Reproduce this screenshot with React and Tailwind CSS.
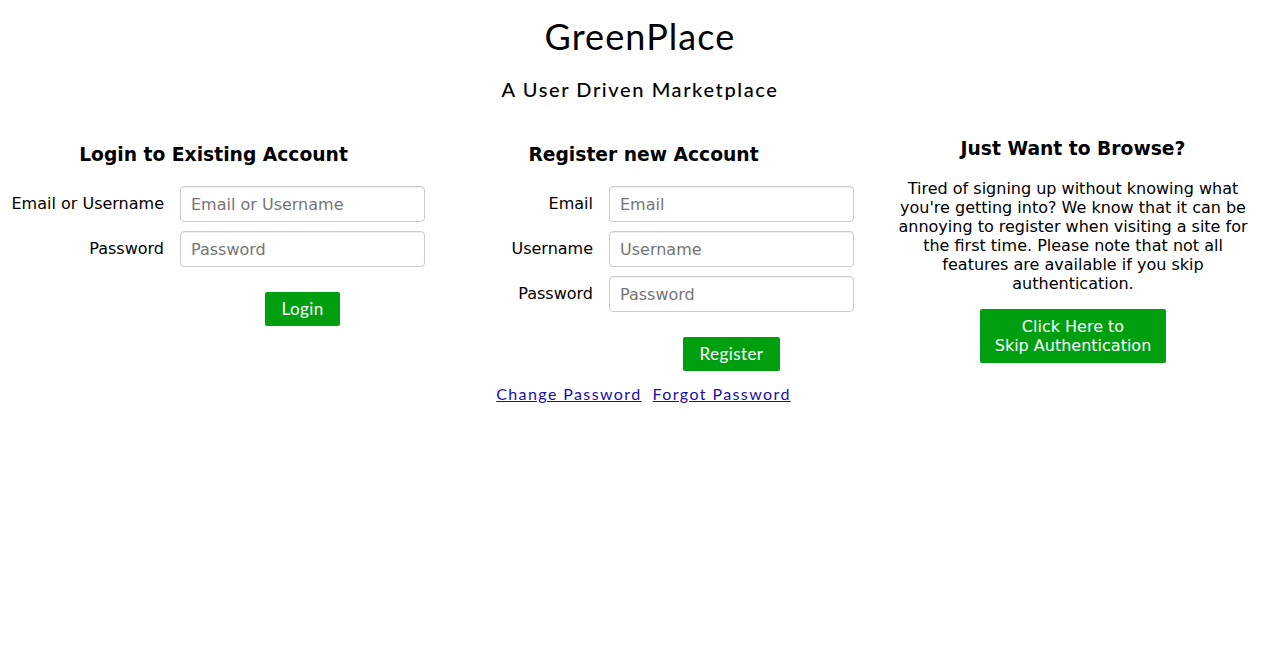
import { useState } from "react";

const body = { fontFamily: '"DejaVu Sans", sans-serif' };
const display = { fontFamily: 'Lato, "Open Sans", sans-serif' };

function Field({ label, placeholder, type = "text" }) {
  return (
    <>
      <label className="text-right text-base text-black self-center">{label}</label>
      <input
        type={type}
        placeholder={placeholder}
        className="h-9 w-[245px] rounded border border-[#cccccc] px-[10px] text-base text-black shadow-[inset_0_1px_1px_rgba(0,0,0,0.075)] placeholder:text-[#757575] outline-none"
        style={body}
      />
    </>
  );
}

function GreenButton({ children, className = "", style }) {
  return (
    <button
      className={"rounded-[2px] bg-[#009f0f] text-white " + className}
      style={style}
    >
      {children}
    </button>
  );
}

export default function App() {
  const [skipped, setSkipped] = useState(false);

  return (
    <div className="min-h-screen bg-white text-black" style={body}>
      <header className="text-center">
        <h1 className="pt-[16px] text-[36px] leading-[40px] tracking-[1.1px]" style={display}>
          GreenPlace
        </h1>
        <p className="mt-[22px] text-[20px] font-medium leading-[22px] tracking-[1.6px]" style={display}>
          A User Driven Marketplace
        </p>
      </header>

      <div className="mt-[43px] flex">
        {/* login */}
        <section className="w-[427px]">
          <h2 className="text-center text-[18.72px] font-bold leading-[24px]">
            Login to Existing Account
          </h2>
          <form
            className="ml-[10px] mt-[19px] grid grid-cols-[154px_245px] gap-x-4 gap-y-[9px]"
            onSubmit={(e) => e.preventDefault()}
          >
            <Field label="Email or Username" placeholder="Email or Username" />
            <Field label="Password" placeholder="Password" type="password" />
            <div />
            <div className="mt-4 flex justify-center">
              <GreenButton className="h-[34px] w-[75px] text-[17px] tracking-[0.4px]" style={display}>
                Login
              </GreenButton>
            </div>
          </form>
        </section>

        {/* register */}
        <section className="w-[433px]">
          <h2 className="text-center text-[18.72px] font-bold leading-[24px]">
            Register new Account
          </h2>
          <form
            className="mt-[19px] grid grid-cols-[166px_245px] gap-x-4 gap-y-[9px]"
            onSubmit={(e) => e.preventDefault()}
          >
            <Field label="Email" placeholder="Email" type="email" />
            <Field label="Username" placeholder="Username" />
            <Field label="Password" placeholder="Password" type="password" />
            <div />
            <div className="mt-4 flex justify-center">
              <GreenButton className="h-[34px] w-[97px] text-[17px] tracking-[0.4px]" style={display}>
                Register
              </GreenButton>
            </div>
          </form>
          <div className="mt-[11px] flex justify-center gap-[11px] text-base tracking-[1.4px]" style={display}>
            <a href="#" className="text-[#1a0dab] underline">Change Password</a>
            <a href="#" className="text-[#1a0dab] underline">Forgot Password</a>
          </div>
        </section>

        {/* browse */}
        <section className="w-[420px] pl-[6px] text-center">
          <h2 className="-mt-[6px] text-[18.72px] font-bold leading-[24px]">
            Just Want to Browse?
          </h2>
          <p className="mx-auto mt-[18px] w-[350px] text-base leading-[19px]">
            Tired of signing up without knowing what you're getting into? We know
            that it can be annoying to register when visiting a site for the first
            time. Please note that not all features are available if you skip
            authentication.
          </p>
          <GreenButton
            className="mt-[16px] h-[54px] w-[186px] text-base leading-[19px]"
            style={body}
          >
            <span onClick={() => setSkipped(!skipped)}>
              Click Here to
              <br />
              Skip Authentication
            </span>
          </GreenButton>
        </section>
      </div>
    </div>
  );
}
